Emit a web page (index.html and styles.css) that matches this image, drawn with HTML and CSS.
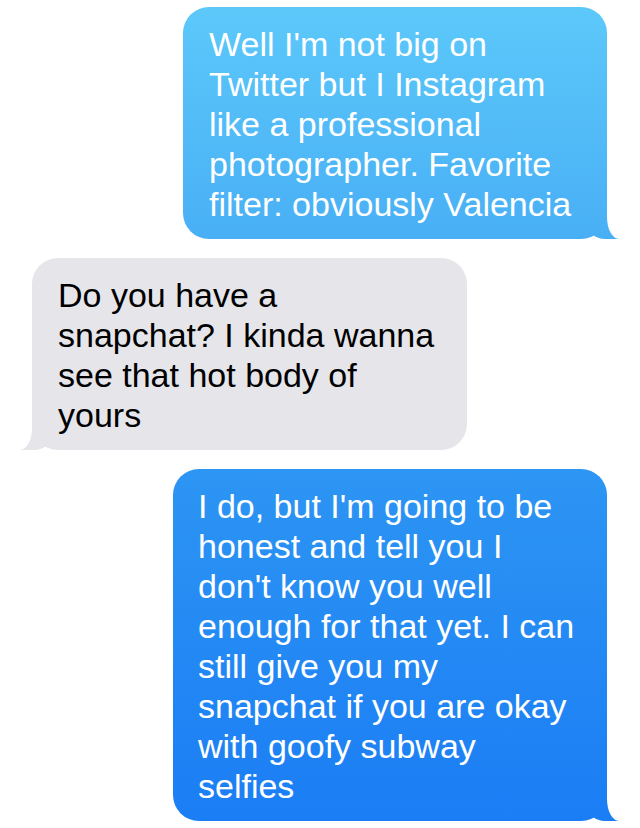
FILE: index.html
```html
<!DOCTYPE html>
<html lang="en">
<head>
  <meta charset="UTF-8">
  <meta name="viewport" content="width=device-width, initial-scale=1.0">
  <title>Messages</title>
  <link rel="stylesheet" href="styles.css">
</head>
<body>
  <div class="thread">
    <div class="bubble out first">Well I'm not big on<br>Twitter but I Instagram<br>like a professional<br>photographer. Favorite<br>filter: obviously Valencia</div>
    <div class="bubble in">Do you have a<br>snapchat? I kinda wanna<br>see that hot body of<br>yours</div>
    <div class="bubble out last">I do, but I'm going to be<br>honest and tell you I<br>don't know you well<br>enough for that yet. I can<br>still give you my<br>snapchat if you are okay<br>with goofy subway<br>selfies</div>
  </div>
</body>
</html>
```

FILE: styles.css
```css
body {
  margin: 0;
  background-color: #ffffff;
  font-family: "Liberation Sans", Arial, sans-serif;
}
.thread {
  display: flex;
  flex-direction: column;
  gap: 19px;
  padding: 7px 0 0;
}
.bubble {
  position: relative;
  box-sizing: border-box;
  font-size: 34px;
  line-height: 40px;
  padding: 17px 14px 15px 26px;
  border-radius: 26px;
  white-space: nowrap;
}
.out,
.out::before {
  background: linear-gradient(to bottom, #5dc9fa 0, #48aff5 240px, #2d95f3 470px, #1a7df5 828px) fixed;
}
.out {
  align-self: flex-end;
  margin-right: 33px;
  color: #ffffff;
}
.first {
  width: 424px;
}
.last {
  width: 434px;
  padding-left: 25px;
}
.in {
  align-self: flex-start;
  margin-left: 32px;
  width: 435px;
  background-color: #e5e5ea;
  color: #000000;
}
.bubble::before,
.bubble::after {
  content: "";
  position: absolute;
  bottom: 0;
  height: 28px;
}
.out::before {
  right: -14px;
  width: 34px;
  border-bottom-left-radius: 18px 16px;
}
.out::after {
  right: -36px;
  width: 36px;
  background-color: #ffffff;
  border-bottom-left-radius: 12px 22px;
}
.in::before {
  left: -14px;
  width: 34px;
  background-color: #e5e5ea;
  border-bottom-right-radius: 18px 16px;
}
.in::after {
  left: -36px;
  width: 36px;
  background-color: #ffffff;
  border-bottom-right-radius: 12px 22px;
}
```
